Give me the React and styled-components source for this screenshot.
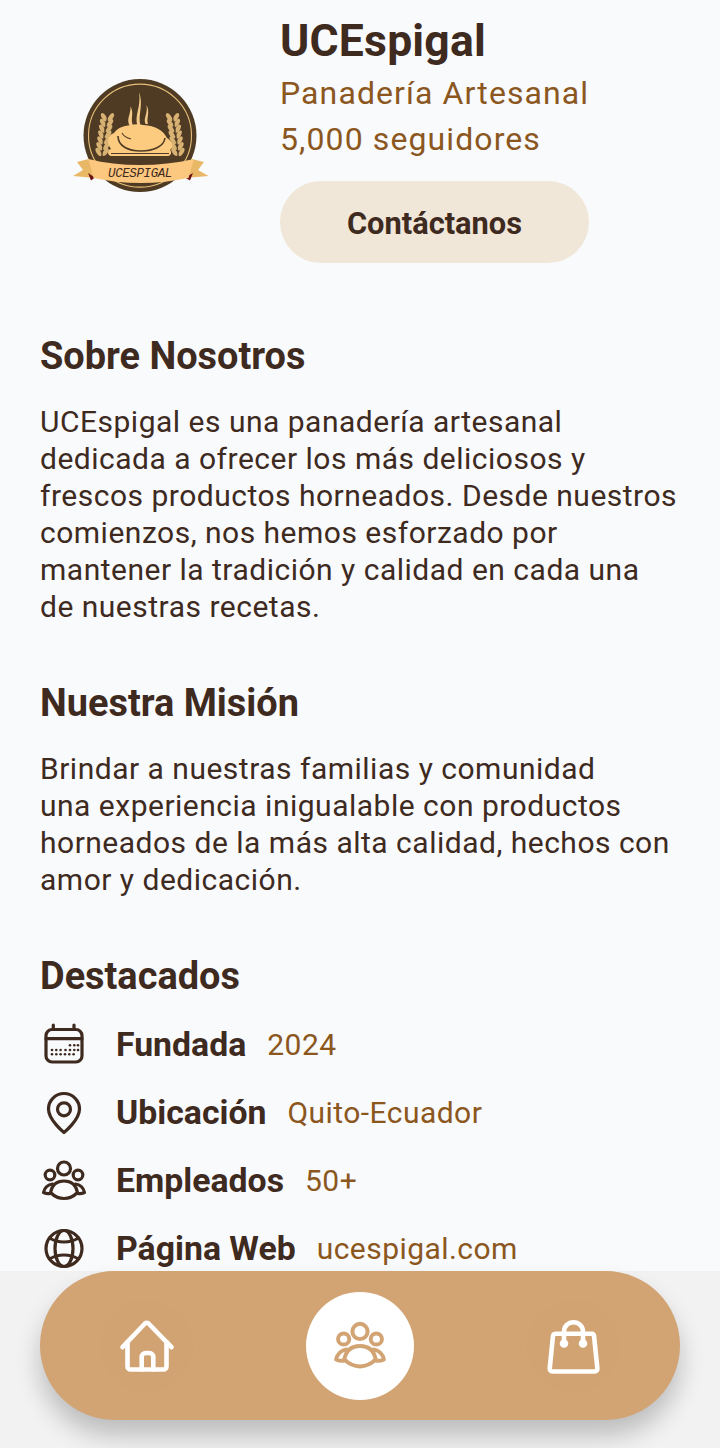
import React from "react";
import styled, { createGlobalStyle } from "styled-components";

const Global = createGlobalStyle`
  html, body { margin: 0; padding: 0; background: #f8fafc; }
  * { box-sizing: border-box; }
`;
const Page = styled.div`
  width: 720px; height: 1448px; display: flex; flex-direction: column;
  font-family: Roboto, sans-serif; color: #3e2a1f; overflow: hidden; background: #f8fafc;
`;
const Main = styled.main`
  height: 1271px; flex: none; overflow: hidden; padding: 0 40px;
`;
const Header = styled.header`
  display: flex; align-items: flex-start; height: 263px; margin-bottom: 68px;
`;
const LogoBox = styled.div`
  width: 240px; flex: none; padding: 79px 0 0 33px;
`;
const HeadInfo = styled.div`
  width: 309px; display: flex; flex-direction: column;
`;
const Title = styled.h1`
  margin: 15px 0 0; font-size: 44.5px; line-height: 52px; font-weight: 700; letter-spacing: 0.2px; color: #3e2a1f;
`;
const Sub = styled.div`
  font-size: 32px; line-height: 46px; letter-spacing: 1.1px; color: #8b571e; white-space: nowrap;
  margin-top: ${p => p.$first ? "3px" : "0"};
`;
const Contact = styled.button`
  margin-top: 19px; height: 82px; width: 309px; border: 0; border-radius: 41px; background: #f0e7d8;
  padding: 3px 0 0;
  font-family: Roboto, sans-serif; font-weight: 700; font-size: 30.8px; color: #3e2a1f;
`;
const Section = styled.section`
  margin-bottom: ${p => p.$mb || 0}px;
`;
const H2 = styled.h2`
  margin: 0 0 22px; font-size: 37.9px; line-height: 50px; font-weight: 700; color: #3e2a1f;
`;
const Para = styled.p`
  margin: 0; font-size: 30px; line-height: 37px; letter-spacing: 0.5px; white-space: pre-line; color: #3e2a1f;
`;
const Items = styled.ul`
  list-style: none; margin: -13px 0 0; padding: 0; display: flex; flex-direction: column;
`;
const Item = styled.li`
  height: 68px; display: flex; align-items: center;
`;
const IconWrap = styled.span`
  width: 48px; height: 48px; margin-right: 28px; flex: none; display: flex; align-items: center; justify-content: center;
  position: relative; top: 1px;
`;
const Label = styled.span`
  font-size: 33.8px; font-weight: 700; margin-right: 21px;
`;
const Value = styled.span`
  font-size: 30px; letter-spacing: 0.45px; color: #8b571e;
`;
const Footer = styled.footer`
  flex: 1; background: #f2f2f2; padding: 0 40px;
`;
const Nav = styled.nav`
  height: 149px; border-radius: 75px; background: #d2a373;
  box-shadow: 0 16px 24px rgba(0,0,0,0.22);
  display: grid; grid-template-columns: 1fr 1fr 1fr; align-items: center; justify-items: center;
`;
const NavItem = styled.div`
  width: ${p => p.$active ? 108 : 92}px; height: ${p => p.$active ? 108 : 92}px; border-radius: 50%;
  display: flex; align-items: center; justify-content: center;
  background: ${p => p.$active ? "#fff" : "#d1a272"};
`;

const Stroke = ({ size = 48, color = "#3e2a1f", sw = 3.2, vb = 48, children }) => (
  <svg width={size} height={size} viewBox={`0 0 ${vb} ${vb}`} fill="none" stroke={color} strokeWidth={sw} strokeLinecap="round" strokeLinejoin="round">{children}</svg>
);

const calDots = [[30,24.3],[34.300,24.3],[38,24.3],[25.500,29],[30,29],[34.300,29],[38,29],[12,33.3],[16.300,33.3],[20.600,33.3],[25,33.3],[29.300,33.3],[33.600,33.3],
  [12,29],[16.300,29],[20.600,29]];
const Calendar = () => (
  <Stroke>
    <rect x="6" y="8.500" width="36" height="32.500" rx="6" />
    <path d="M6 17.700h36M13.300 4v4.500M34 4v4.500" />
    <g fill="#3e2a1f" stroke="none">
      {calDots.map(([x,y],i)=><circle key={i} cx={x} cy={y} r="1.300"/>)}
    </g>
  </Stroke>
);
const Pin = () => (
  <Stroke>
    <path d="M24 43.500C24 43.500 8.500 31 8.500 20a15.500 15.500 0 0 1 31 0C39.500 31 24 43.500 24 43.500Z" />
    <circle cx="24" cy="20.300" r="6.500" />
  </Stroke>
);
const People = ({ color = "#3e2a1f", size = 48, sw = 3.2 }) => (
  <Stroke color={color} size={size} sw={sw}>
    <circle cx="24" cy="11.500" r="6.500" />
    <circle cx="10" cy="18" r="4.800" />
    <circle cx="38" cy="18" r="4.800" />
    <path d="M10.500 35.500C12 28 17 24 24 24s12 4 13.500 11.500C33 40 28.500 41.500 24 41.500s-9-1.500-13.500-6Z" />
    <path d="M12.500 27C8 27.500 4.500 31 3.500 35.500c2.500 1.200 4.500 1.500 7 1M35.500 27C40 27.500 43.500 31 44.500 35.500c-2.500 1.200-4.500 1.500-7 1" />
  </Stroke>
);
const Globe = () => (
  <Stroke>
    <circle cx="24" cy="23.500" r="18" />
    <ellipse cx="24" cy="23.500" rx="9" ry="18" />
    <path d="M9.500 13c4 2.500 9 4 14.500 4s10.500-1.500 14.500-4M9.500 34c4-2.500 9-4 14.500-4s10.500 1.500 14.500 4" />
  </Stroke>
);
const Home = () => (
  <Stroke size={60} vb={60} color="#fff" sw={4.6}>
    <path d="M5.500 31.200 28 7.500a2.500 2.500 0 0 1 3.500 0L54.500 31.200" />
    <path d="M10.500 26v24.500a3 3 0 0 0 3 3h33a3 3 0 0 0 3-3V26" />
    <path d="M24.700 53.500V41a4 4 0 0 1 4-4h3.600a4 4 0 0 1 4 4v12.500" />
  </Stroke>
);
const Bag = () => (
  <Stroke size={60} vb={60} color="#fff" sw={4.6}>
    <path d="M13 17.800h36a2 2 0 0 1 2 2l3.400 32.700a3 3 0 0 1-3 3H9.700a3 3 0 0 1-3-3L10 19.800a2.500 2.500 0 0 1 3-2Z" />
    <path d="M21 27V15.700a9.500 9.500 0 0 1 19 0V27" />
    <circle cx="21" cy="27.500" r="2" fill="#fff" />
    <circle cx="40" cy="27.500" r="2" fill="#fff" />
  </Stroke>
);

const wheat = [0,1,2,3,4,5,6];
const WheatEar = () => (
  <g fill="#d8b273">
    {wheat.map(i => {
      const y = 73 - i * 5.8, x = 29 + i * 0.9;
      return <g key={i}>
        <ellipse cx={x - 3.500} cy={y} rx="2.200" ry="4.600" transform={`rotate(-30 ${x - 3.500} ${y})`} />
        <ellipse cx={x + 3.500} cy={y} rx="2.200" ry="4.600" transform={`rotate(34 ${x + 3.500} ${y})`} />
      </g>;
    })}
    <path d="M29 82c0-14 2-32 6-46" fill="none" stroke="#4f3b23" strokeWidth="0.800" />
  </g>
);

const Logo = () => (
  <svg width="136" height="114" viewBox="0 0 136 114" style={{ display: "block" }}>
    <circle cx="67" cy="56.600" r="56.500" fill="#4f3b23" />
    <circle cx="67" cy="56.600" r="51.500" fill="none" stroke="#e7bf7a" strokeWidth="1.100" />
    <g fill="#f3ca88" stroke="none">
      <path d="M56.500 46.500c-3.500-7 1.500-11 1-19 4 7-.5 12 2.500 19ZM64.500 47c-3.500-11 4-19 1.500-34 5 13-1.500 22 1.500 34ZM72.500 45c-2.500-6 2.500-10 1-19 4 8-.5 13 1.500 19Z" />
    </g>
    <WheatEar />
    <g transform="matrix(-1 0 0 1 134 0)"><WheatEar /></g>
    <path d="M38 77c-4-1-4-6 0-7-5-7-3-14 3-16 4-5 8-7 17-8 4-1 8-1 12 0 13 1 20 5 24 13 6 4 7 9 3 12 2 2 1 6-2 6H38Z" fill="#fdcb80" />
    <path d="M45 57c0 10 10 15 23 15s23-5 24-13" stroke="#4f3b23" strokeWidth="1.600" fill="none" />
    <path d="M38 74.500h58" stroke="#4f3b23" strokeWidth="1" />
    <path d="M49 54c2 4 5 5 9 6" stroke="#4f3b23" strokeWidth="1.100" fill="none" />
    <path d="M4 83 15.500 80 22 99 0 97l10-6Z" fill="#e9b866" />
    <path d="M131 83 118.500 80 112 99l23.500-2-10.500-6Z" fill="#e9b866" />
    <path d="M15 94l3 7.500 4-3Z" fill="#6d1414" />
    <path d="M120 94l-3 7.500-5-3Z" fill="#6d1414" />
    <path d="M15.500 80c16 4 33 6 51.500 6s36-2 54-6l-5.500 19c-15 3-31 5-48 5s-32-2-47-5Z" fill="#fcc77e" />
    <text x="67" y="98" textAnchor="middle" fontFamily="'Liberation Mono', monospace" fontStyle="italic" fontSize="12.500" letterSpacing="-0.400" fill="#3e2a1f">UCESPIGAL</text>
  </svg>
);

export default function App() {
  return (
    <Page>
      <Global />
      <Main>
        <Header>
          <LogoBox><Logo /></LogoBox>
          <HeadInfo>
            <Title>UCEspigal</Title>
            <Sub $first>Panadería Artesanal</Sub>
            <Sub>5,000 seguidores</Sub>
            <Contact>Contáctanos</Contact>
          </HeadInfo>
        </Header>
        <Section $mb={53}>
          <H2>Sobre Nosotros</H2>
          <Para>{"UCEspigal es una panadería artesanal\ndedicada a ofrecer los más deliciosos y\nfrescos productos horneados. Desde nuestros\ncomienzos, nos hemos esforzado por\nmantener la tradición y calidad en cada una\nde nuestras recetas."}</Para>
        </Section>
        <Section $mb={53}>
          <H2>Nuestra Misión</H2>
          <Para>{"Brindar a nuestras familias y comunidad\nuna experiencia inigualable con productos\nhorneados de la más alta calidad, hechos con\namor y dedicación."}</Para>
        </Section>
        <Section>
          <H2>Destacados</H2>
          <Items>
            <Item><IconWrap><Calendar /></IconWrap><Label>Fundada</Label><Value>2024</Value></Item>
            <Item><IconWrap><Pin /></IconWrap><Label>Ubicación</Label><Value>Quito-Ecuador</Value></Item>
            <Item><IconWrap><People /></IconWrap><Label>Empleados</Label><Value>50+</Value></Item>
            <Item><IconWrap><Globe /></IconWrap><Label>Página Web</Label><Value>ucespigal.com</Value></Item>
          </Items>
        </Section>
      </Main>
      <Footer>
        <Nav>
          <NavItem><Home /></NavItem>
          <NavItem $active><People color="#d2a373" size={56} sw={3.4} /></NavItem>
          <NavItem><Bag /></NavItem>
        </Nav>
      </Footer>
    </Page>
  );
}
